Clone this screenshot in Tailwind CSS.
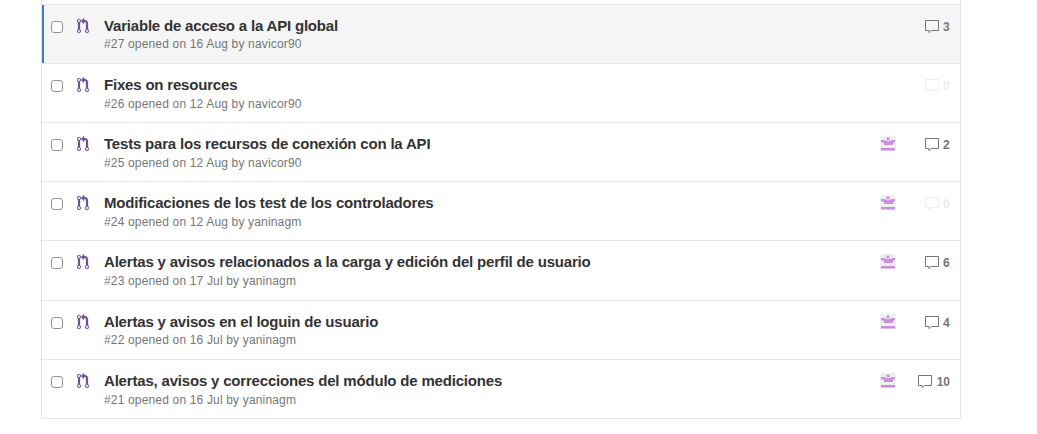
<!DOCTYPE html>
<html lang="en">
<head>
<meta charset="utf-8">
<title>Pull requests</title>
<script src="https://cdn.jsdelivr.net/npm/@tailwindcss/browser@4"></script>
</head>
<body class="bg-white font-['Liberation_Sans',Arial,sans-serif]">
<svg class="hidden">
  <symbol id="pr" viewBox="0 0 12 16"><path d="M11 11.28V5c-.03-.78-.34-1.47-.94-2.06C9.46 2.35 8.78 2.03 8 2H7V0L4 3l3 3V4h1c.27.02.48.11.69.31.21.2.3.42.31.69v6.28A1.993 1.993 0 0 0 10 15a1.993 1.993 0 0 0 1-3.72zm-1 2.92c-.66 0-1.2-.55-1.2-1.2 0-.65.55-1.2 1.2-1.2.65 0 1.2.55 1.2 1.2 0 .65-.55 1.2-1.2 1.2zM4 3c0-1.11-.89-2-2-2a1.993 1.993 0 0 0-1 3.72v6.56A1.993 1.993 0 0 0 2 15a1.993 1.993 0 0 0 1-3.72V4.72c.59-.34 1-.98 1-1.72zm-.8 10c0 .66-.55 1.2-1.2 1.2-.65 0-1.2-.55-1.2-1.2 0-.65.55-1.2 1.2-1.2.65 0 1.2.55 1.2 1.2zM2 4.2C1.34 4.2.8 3.65.8 3c0-.65.55-1.2 1.2-1.2.65 0 1.2.55 1.2 1.2 0 .65-.55 1.2-1.2 1.2z"/></symbol>
  <symbol id="comment" viewBox="0 0 14 14"><path d="M.5.5h13v10H6.2L4 12.700v-2.2H.5z" fill="none" stroke="currentColor"/></symbol>
  <symbol id="avatar" viewBox="0 0 16 16"><rect width="16" height="15" rx="1.500" fill="#f0f0f0"/><path stroke="none" fill="#c78fde" d="M6.500 1.500h3V4h-3zM1 4h4v1h1.500V4h3v1H11V4h4v2.500h-2V9H4V6.500H1zM1 12h14v2.600H1z"/><path stroke="none" fill="#f0f0f0" d="M7.200 4h1.600v1.400H7.200z"/></symbol>
</svg>
<main id="list" class="ml-[41px] w-[920px] border-x border-b border-[#e5e5e5] pt-1"></main>
<template id="row">
  <article class="flex border-t border-[#e8e8e8]">
    <span class="mt-4 ml-[9px] size-3 shrink-0 rounded-[3px] border border-[#949494] bg-white"></span>
    <svg class="mt-[13px] ml-[14px] h-4 w-3 shrink-0 overflow-visible fill-[#6e5494] stroke-[#6e5494] stroke-[0.25]"><use href="#pr"/></svg>
    <div class="mt-[11px] ml-[15px] grow whitespace-nowrap">
      <h2 class="text-[15px] leading-[20px] font-bold tracking-[-0.19px] text-[#333]"></h2>
      <p class="text-[12px] leading-4 tracking-[0.165px] text-[#767676]"></p>
    </div>
    <svg class="avatar mt-[13px] size-4 shrink-0"><use href="#avatar"/></svg>
    <div class="count mt-[14px] mr-[10px] flex w-[54px] shrink-0 justify-end gap-1 text-[12px] leading-[15px] font-bold text-[#767676]">
      <svg class="mt-px h-[14px] w-[14px]"><use href="#comment"/></svg><span class="min-w-[7px] pt-px"></span>
    </div>
  </article>
</template>
<script>
const rows = [
  ["Variable de acceso a la API global", "#27 opened on 16 Aug by navicor90", 3, 0, 59, 0],
  ["Fixes on resources", "#26 opened on 12 Aug by navicor90", 0, 0, 59, 1],
  ["Tests para los recursos de conexión con la API", "#25 opened on 12 Aug by navicor90", 2, 1, 59, 1],
  ["Modificaciones de los test de los controladores", "#24 opened on 12 Aug by yaninagm", 0, 1, 59, 1],
  ["Alertas y avisos relacionados a la carga y edición del perfil de usuario", "#23 opened on 17 Jul by yaninagm", 6, 1, 60, 1],
  ["Alertas y avisos en el loguin de usuario", "#22 opened on 16 Jul by yaninagm", 4, 1, 59, 0],
  ["Alertas, avisos y correcciones del módulo de mediciones", "#21 opened on 16 Jul by yaninagm", 10, 1, 59, 1]
];
rows.forEach(([title, meta, count, avatar, height, gap], i) => {
  const el = document.getElementById("row").content.firstElementChild.cloneNode(true);
  el.style.height = height + "px";
  if (i === 0) el.classList.add("bg-[#f5f5f5]", "shadow-[inset_2px_0_0_#4078c0]");
  el.querySelector("h2").textContent = title;
  el.querySelector("p").textContent = meta;
  if (gap) el.querySelector("p").classList.add("mt-px");
  el.querySelector(".count span").textContent = count;
  if (count > 9) el.querySelector(".count").classList.replace("gap-1", "gap-[5px]");
  if (!count) el.querySelector(".count").classList.replace("text-[#767676]", "text-[#eeeeee]");
  if (!avatar) el.querySelector(".avatar").remove();
  document.getElementById("list").append(el);
});
</script>
</body>
</html>
